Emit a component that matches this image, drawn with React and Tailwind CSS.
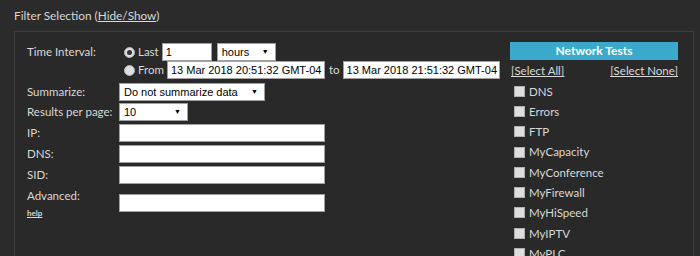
import { useState } from "react";

const TESTS = [
    "DNS",
    "Errors",
    "FTP",
    "MyCapacity",
    "MyConference",
    "MyFirewall",
    "MyHiSpeed",
    "MyIPTV",
    "MyPLC",
    "MyQoS",
];

// little grey radio like the old windows one
const Radio = ({ checked }) => (
    <span className="w-[11px] h-[11px] rounded-full bg-[#dedede] border border-[#b5b5b5] flex items-center justify-center shrink-0">
        {checked && <span className="w-[5px] h-[5px] rounded-full bg-[#333]" />}
    </span>
);

const Box = () => (
    <span className="w-[11px] h-[11px] bg-[#dedede] border border-[#b0b0b0] shrink-0" />
);

const Field = ({ value = "", w }) => (
    <div
        className={`h-[18px] bg-white border border-[#a0a0a0] px-[3px] flex items-center text-black text-[11px] font-['Liberation_Sans',Arial,sans-serif] whitespace-nowrap overflow-hidden ${w}`}
    >
        {value}
    </div>
);

const Select = ({ value, w }) => (
    <div
        className={`h-[18px] bg-white border border-[#a0a0a0] pl-[4px] pr-[6px] flex items-center justify-between text-black text-[11px] font-['Liberation_Sans',Arial,sans-serif] ${w}`}
    >
        <span>{value}</span>
        <span className="text-[7px]">▼</span>
    </div>
);

const App = () => {
    const [mode] = useState("last");

    return (
        <div className="w-[700px] h-[256px] overflow-hidden bg-[#2b2b2b] text-[#d8d8d8] font-['Lato','Noto_Sans',sans-serif] text-[11.5px] pl-[14px] pr-[6px]">
            {/* TITLE */}
            <div className="h-[31px] flex items-center text-[11.8px]">
                <span>
                    Filter Selection (<span className="underline">Hide/Show</span>)
                </span>
            </div>

            {/* PANEL */}
            <div className="h-[240px] border border-[#3c3c3c] bg-[#292929] pt-[11px] pl-[12px] pr-[15px] flex">
                {/* LEFT FORM */}
                <div className="flex-1">
                    <div className="flex">
                        <div className="w-[92px] h-[18px] flex items-center">Time Interval:</div>
                        <div>
                            <div className="h-[18px] flex items-center pl-[5px]">
                                <Radio checked={mode === "last"} />
                                <span className="ml-[3px] mr-[3px]">Last</span>
                                <Field value="1" w="w-[50px]" />
                                <Select value="hours" w="w-[59px] ml-[5px]" />
                            </div>
                            <div className="h-[18px] flex items-center pl-[5px]">
                                <Radio checked={mode === "from"} />
                                <span className="ml-[3px] mr-[3px]">From</span>
                                <Field value="13 Mar 2018 20:51:32 GMT-04" w="w-[158px]" />
                                <span className="ml-[4px] mr-[3px]">to</span>
                                <Field value="13 Mar 2018 21:51:32 GMT-04" w="w-[157px]" />
                            </div>
                        </div>
                    </div>

                    <div className="flex mt-[4px]">
                        <div className="w-[92px] h-[18px] flex items-center">Summarize:</div>
                        <Select value="Do not summarize data" w="w-[146px]" />
                    </div>

                    <div className="flex mt-[2px]">
                        <div className="w-[92px] h-[18px] flex items-center whitespace-nowrap">Results per page:</div>
                        <Select value="10" w="w-[69px]" />
                    </div>

                    <div className="flex mt-[3px]">
                        <div className="w-[92px] h-[18px] flex items-center">IP:</div>
                        <Field w="w-[206px]" />
                    </div>

                    <div className="flex mt-[3px]">
                        <div className="w-[92px] h-[18px] flex items-center">DNS:</div>
                        <Field w="w-[206px]" />
                    </div>

                    <div className="flex mt-[3px]">
                        <div className="w-[92px] h-[18px] flex items-center">SID:</div>
                        <Field w="w-[206px]" />
                    </div>

                    <div className="flex mt-[4px]">
                        <div className="w-[92px]">
                            <div className="h-[16px] flex items-center">Advanced:</div>
                            <div className="mt-[4px] text-[8px] font-bold underline leading-[10px]">help</div>
                        </div>
                        <div className="pt-[6px]">
                            <Field w="w-[206px]" />
                        </div>
                    </div>
                </div>

                {/* NETWORK TESTS */}
                <div className="w-[168px] shrink-0 -mt-px">
                    <div className="h-[18px] bg-[#3aa9cb] text-white text-[12px] font-bold flex items-center justify-center">
                        Network Tests
                    </div>
                    <div className="h-[18px] mt-[2px] flex items-center justify-between pl-[1px]">
                        <span className="underline">[Select All]</span>
                        <span className="underline">[Select None]</span>
                    </div>
                    <div className="mt-px">
                        {TESTS.map((t) => (
                            <div key={t} className="h-[20.3px] flex items-center pl-[4px] gap-[4px]">
                                <Box />
                                <span>{t}</span>
                            </div>
                        ))}
                    </div>
                </div>
            </div>
        </div>
    );
};

export default App;
